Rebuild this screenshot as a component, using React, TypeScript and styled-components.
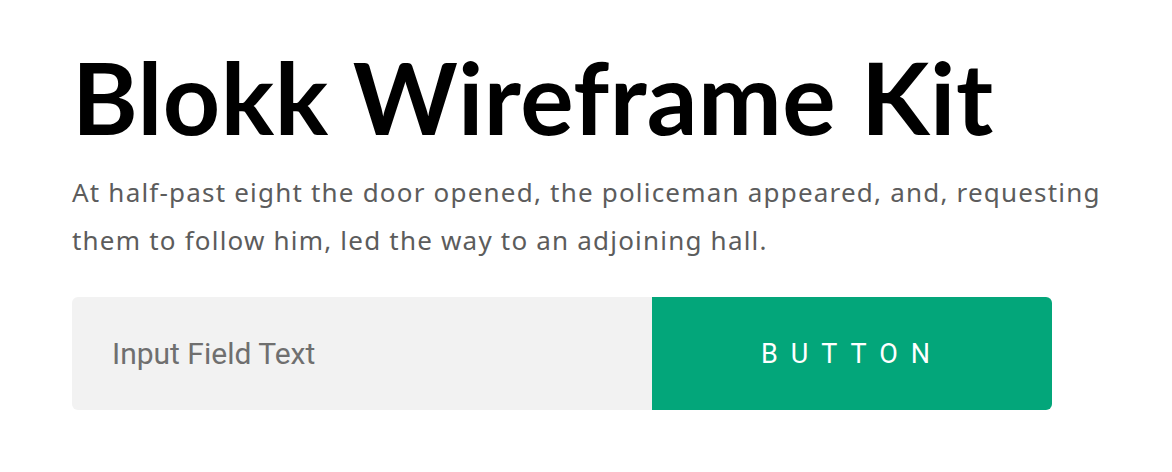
import React from 'react';
import styled, { createGlobalStyle } from 'styled-components';

const GlobalStyle = createGlobalStyle`
	html, body {
		margin: 0;
		padding: 0;
		background: #ffffff;
	}
`;

const Page = styled.div`
	padding: 34px 0 0 72px;
	font-family: "Noto Sans", "Open Sans", sans-serif;
`;

const Title = styled.h1`
	margin: 0;
	font-family: Lato, "Noto Sans", sans-serif;
	font-size: 100px;
	font-weight: 700;
	line-height: 124px;
	color: #000000;
	letter-spacing: 0.5px;
`;

const Lead = styled.p`
	margin: 10px 0 0;
	width: 1060px;
	font-size: 26px;
	line-height: 48px;
	letter-spacing: 1.2px;
	color: #5c5c5c;
`;

const Form = styled.div`
	display: flex;
	width: 980px;
	height: 113px;
	margin-top: 33px;
	border-radius: 6px;
	overflow: hidden;
`;

const Field = styled.input`
	flex: 1;
	border: none;
	outline: none;
	background: #f2f2f2;
	padding: 0 40px;
	font-family: Roboto, "Liberation Sans", sans-serif;
	font-size: 30px;
	color: #6f6f6f;

	&::placeholder {
		color: #6f6f6f;
	}
`;

const Button = styled.button`
	width: 400px;
	border: none;
	background: #03a67a;
	color: #ffffff;
	font-family: Roboto, "Liberation Sans", sans-serif;
	font-size: 27px;
	letter-spacing: 13px;
	cursor: pointer;
`;

const App = () => (
	<>
		<GlobalStyle />
		<Page>
			<Title>Blokk Wireframe Kit</Title>
			<Lead>
				At half-past eight the door opened, the policeman appeared, and, requesting
				them to follow him, led the way to an adjoining hall.
			</Lead>
			<Form>
				<Field placeholder="Input Field Text" />
				<Button>BUTTON</Button>
			</Form>
		</Page>
	</>
);

export default App;
